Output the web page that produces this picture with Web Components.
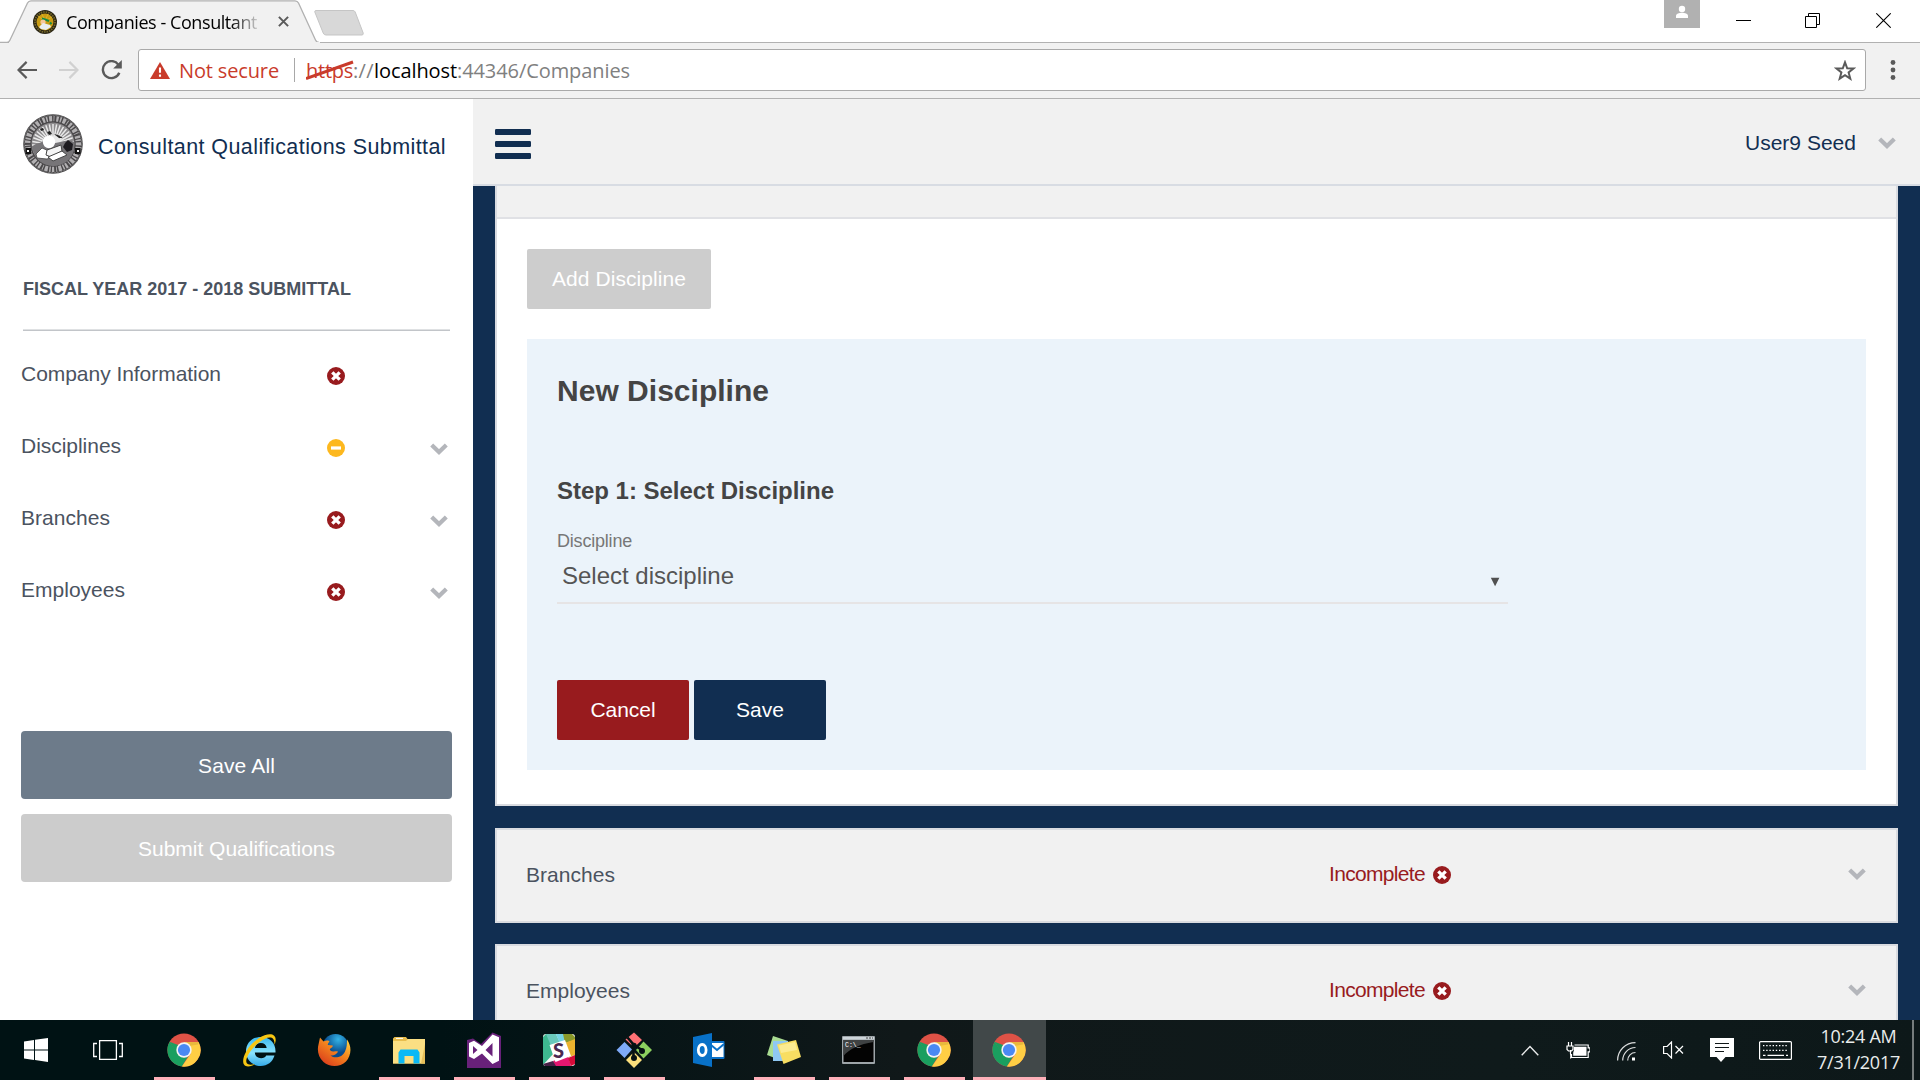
<!DOCTYPE html>
<html lang="en">
<head>
<meta charset="utf-8">
<title>Companies - Consultant Qualifications Submittal</title>
<style>
html,body{margin:0;width:1920px;height:1080px;overflow:hidden;background:#fff;font-family:"Liberation Sans",Arial,sans-serif}
</style>
</head>
<body>
<desktop-screen></desktop-screen>
<script>
const define = (name, html, setup) => {
  const tpl = document.createElement('template');
  tpl.innerHTML = '<style>:host{display:block;box-sizing:border-box}*{box-sizing:border-box}svg{display:block}</style>' + html;
  customElements.define(name, class extends HTMLElement {
    connectedCallback() {
      if (this.shadowRoot) return;
      this.attachShadow({ mode: 'open' }).append(tpl.content.cloneNode(true));
      if (setup) setup(this, this.shadowRoot);
    }
  });
};

/* Icon library: name -> [width, height, markup] */
const chromeLogo = `<circle cx="17" cy="17" r="16.6" fill="#de5246"/>
<path d="M2.6 8.7A16.6 16.6 0 0 0 14.9 33.5L22.8 20.4 17 24.7 10.3 20.5Z" fill="#1a9f5f"/>
<path d="M17 9.3H31.7A16.6 16.6 0 0 1 14.9 33.5L23.7 20.8Z" fill="#ffce44"/>
<path d="M2.6 8.7 10 21 11 12Z" fill="#1a9f5f"/>
<path d="M17 9.3H31.7L31 11.5 22 13Z" fill="#e9b93c"/>
<circle cx="17" cy="17" r="7.7" fill="#f4f4f4"/><circle cx="17" cy="17" r="6.1" fill="#4a89f3"/>`;
const rays = Array.from({length:19},(_,i)=>{const a=Math.PI*(1+i/18);return `M30 31L${(30+21*Math.cos(a)).toFixed(1)} ${(31+21*Math.sin(a)).toFixed(1)}`}).join('');
const ICONS = {
  error:[18,18,`<circle cx="9" cy="9" r="9" fill="#981b1e"/><path d="M5.3 5.3 12.7 12.7M12.7 5.3 5.3 12.7" stroke="#fff" stroke-width="3.3"/><path d="M9 3v2.8M9 12.2v2.8M3 9h2.8M12.2 9h2.8" stroke="#981b1e" stroke-width="1"/>`],
  partial:[18,18,`<circle cx="9" cy="9" r="9" fill="#fdb81e"/><path d="M4 9h10" stroke="#fff" stroke-width="3.2"/>`],
  chevron:[18,12,`<path d="M1.7 1.9 9 9 16.3 1.9" fill="none" stroke="#b4b6bb" stroke-width="4.2"/>`],
  menu:[36,30,`<g fill="#112e51"><rect width="36" height="6" rx="1.2"/><rect y="12" width="36" height="6" rx="1.2"/><rect y="24" width="36" height="6" rx="1.2"/></g>`],
  caret:[10,10,`<path d="M.8.7h8.6L5.1 9.2Z" fill="#505050"/>`],
  seal:[60,60,`<circle cx="30" cy="30" r="29.8" fill="#4a484a"/><circle cx="30" cy="30" r="25.4" fill="none" stroke="#b2b0b2" stroke-width="5.4" stroke-dasharray="1.5 1.4 3.1 1.5 .9 2 2.3 1.3"/><circle cx="30" cy="30" r="28.8" fill="none" stroke="#777" stroke-width="1" stroke-dasharray="2 1"/>
<circle cx="30" cy="30" r="21.5" fill="#8d8b8d"/><path d="${rays}" stroke="#e9e9e9" stroke-width="1.5"/>
<path d="M9 33c4-5 8-3 11-6s6 1 11 2 12-5 20-1v8c-2 9-10 16-21 16S11 43 9 33Z" fill="#777578"/>
<circle cx="26" cy="28" r="6.2" fill="#fff"/><path d="M13 40l6-6 7 3 3 6-5 2-10-1Z" fill="#fff" stroke="#444" stroke-width=".8"/><path d="M24 36l14-5 1 6-11 6-5-2Z" fill="#f5f5f5" stroke="#444" stroke-width="1"/><path d="M25 43l14-6 5 4-14 6Z" fill="#fff" stroke="#444" stroke-width="1"/>
<path d="M42 29l3-3 5 4-1 6-5 2-4-5Z" fill="#1e1c20"/><path d="M17 15l3-1 1 2-3 1ZM24 18l3-1 2 3-3 1ZM31 20l4 1 5 3-4 0Z" fill="#222"/>
<rect x="2.5" y="34" width="5.5" height="6" fill="#111"/><rect x="52" y="34" width="5.5" height="6" fill="#111"/><path d="M4 36h2v2H4ZM54 36h2v2H54Z" fill="#fff"/>`],
  favicon:[24,24,`<circle cx="12" cy="12" r="12" fill="#292413"/><circle cx="12" cy="12" r="10" fill="none" stroke="#776a2c" stroke-width="1.7" stroke-dasharray="1.5 1"/><circle cx="12" cy="12" r="8.5" fill="#c99c13"/><path d="M12 11 5 6M12 11 9 4M12 11 15 4M12 11 19 7" stroke="#e2b92b" stroke-width=".8"/><path d="M9 8.5 13.5 10 16 11M17 12.5 18.5 14" stroke="#118a45" stroke-width="2"/><circle cx="10" cy="12" r="2.6" fill="#f5c89a"/><path d="M6 17l4-4 7 2 1 2-5 3-5-1Z" fill="#e9eef0"/>`],
  tabclose:[11,11,`<path d="M.9.9 10.1 10.1M10.1.9.9 10.1" stroke="#5a5a5a" stroke-width="2"/>`],
  person:[36,28,`<rect width="36" height="28" fill="#b1b1b1"/><circle cx="18" cy="9" r="3.2" fill="#fff"/><path d="M12 18v-2c0-2.2 3-3.3 6-3.3s6 1.100 6 3.300v2Z" fill="#fff"/>`],
  minimize:[15,15,`<path d="M0 7.5h15" stroke="#000"/>`],
  restore:[15,15,`<path d="M.5 3.500h11v11H.5ZM3.500 3.500V.5h11v11h-3" fill="none" stroke="#000"/>`],
  close:[15,15,`<path d="M.3.3 14.7 14.7M14.700.3.3 14.700" stroke="#000" stroke-width="1.1"/>`],
  back:[20,18,`<path d="M20 9H2M9.600.9 1.500 9l8.100 8.100" fill="none" stroke="#5a5a5a" stroke-width="2.2"/>`],
  forward:[20,18,`<path d="M0 9h18M10.400.9 18.500 9l-8.100 8.100" fill="none" stroke="#d1d1d1" stroke-width="2.2"/>`],
  reload:[21,20,`<path d="M17.300 4.600A8.500 8.500 0 1 0 18.300 12.700" fill="none" stroke="#5a5a5a" stroke-width="2.400"/><path d="M20.800 0v8.600h-8.600Z" fill="#5a5a5a"/>`],
  warning:[20,17,`<path d="M10 0 20 17H0Z" fill="#c93b2b"/><path d="M10 5.500v5.200M10 12.500v2.200" stroke="#fff" stroke-width="2.100"/>`],
  star:[22,21,`<path d="M11 2.300 13.200 8.300 19.500 8.500 14.600 12.400 16.300 18.600 11 15.100 5.700 18.600 7.400 12.400 2.500 8.500 8.800 8.300Z" fill="none" stroke="#5a5a5a" stroke-width="2"/>`],
  dots:[6,20,`<g fill="#5a5a5a"><circle cx="3" cy="2.500" r="2.400"/><circle cx="3" cy="10" r="2.400"/><circle cx="3" cy="17.500" r="2.400"/></g>`],
  windows:[24,24,`<path d="M0 3.500 10 2v9.500H0ZM11 1.800 24 0v11.500H11ZM0 12.500h10V22L0 20.500ZM11 12.500h13V24L11 22.100Z" fill="#fff"/>`],
  taskview:[30,20,`<path d="M6.600.6h16.800v18.800H6.600ZM4 3.500H.700v13H4M26 3.500h3.300v13H26" fill="none" stroke="#fff" stroke-width="1.300"/>`],
  chrome:[34,34,chromeLogo],
  ie:[36,36,`<defs><linearGradient id="b" x2="0" y2="1"><stop stop-color="#39b8f0"/><stop offset=".55" stop-color="#8be3fd"/><stop offset="1" stop-color="#35a9e8"/></linearGradient></defs><path d="M34.500 20.500H13.800c.3 3.700 3 5.700 6.300 5.700 2.500 0 4.200-1 5.100-2.700h8.300c-2 6.600-7 10.400-13.800 10.400C11.800 33.900 5 28 5 19.500S11.300 4.900 19.700 4.900c9.300 0 15.300 6.200 14.800 15.600ZM13.900 16h11.800c-.5-3.200-2.700-4.900-5.800-4.900s-5.400 1.800-6 4.900Z" fill="url(#b)"/><path d="M33.500 13C38 2 29-1 17.500 6.500 5 15 0 28 3 32.500c2.500 3.500 8 1.500 11-.5-4 1-7 1-8.300-1-2-3 2.500-13 12-20.300C26 4.500 34 2.500 33.500 13Z" fill="#f7c612"/>`],
  firefox:[34,34,`<defs><radialGradient id="a" cx=".6" cy=".2"><stop stop-color="#34b3e6"/><stop offset="1" stop-color="#084b8d"/></radialGradient><linearGradient id="c" x1="1" x2=".2" y2="1"><stop stop-color="#ffe34c"/><stop offset=".45" stop-color="#f68a1e"/><stop offset="1" stop-color="#d93a1c"/></linearGradient></defs><circle cx="18.500" cy="14.500" r="13.500" fill="url(#a)"/><path d="M30 6.500c5 7 4.500 16-1 22-6 6-16.500 6-22.500.5C1 24 0 17 1.500 11.500L3 4.500l3.500 4c3-1.500 5.500-1 6 .3-1.200 1.200-1.600 2-1.700 3.200l5 .5c0 1.500-1 2.300-3 3.400.1 1.500 1.500 2.700 3.900 2.500 2 0 3.400-.6 4.300.4-1.500 2.800-4.500 4.200-7.500 3.700 4 3.500 12 2 14.500-4 2-4.500 2-8.500 2-12Z" fill="url(#c)"/>`],
  folder:[32,28,`<path d="M0 2.500 1.500 1H13l1.500 2H32v24.500H0Z" fill="#e8bd4d"/><path d="M0 5h13l2-2h17v24.500H0Z" fill="#fbdf83"/><path d="M3 2.400h7" stroke="#fff" stroke-width="1"/><path d="M5.500 27.500V16.500l2-3h17l2 3v11h-6v-7.500h-9v7.500Z" fill="#0bb9f5"/><path d="M32 8v19.500H28Z" fill="#e6bf5a"/>`],
  vs:[34,36,`<path d="M0 8 6 6.500 14 12 25.500.5 34 4v32H0Z" fill="#68217a"/><path fill-rule="evenodd" d="M25.500 2.500 32 5.300v23.400L25.500 32 15 21.500 7 27 2 24.500V11l5-2.200 8 5.300ZM6 14v8l4.500-4ZM25.500 11 18.500 18l7 6.500Z" fill="#fff"/>`],
  slack:[32,34,`<rect y="1" width="32" height="32" rx="3" fill="#f7f7f7"/><path d="M3 1H13L17 10 3 15Z" fill="#69c8ba"/><path d="M13 1h9l4 6-9 4Z" fill="#75d4e4"/><path d="M0 4 3 1l8 19-11 12Z" fill="#3eb890"/><path d="M20 1h9l3 3v3L22 10Z" fill="#89992a"/><path d="M22 10 32 6v16l-6 2Z" fill="#ecb32e"/><path d="M10 28l15-5 3 10H12Z" fill="#e51670"/><path d="M0 31l10-3 3 5H2Z" fill="#472047"/><path d="M25 25l7-3v9l-4 2Z" fill="#d60b38"/><path d="M6.500 12 22 7l6 16-15.500 6Z" fill="#fff"/><text x="10" y="25" font-family="Lato,sans-serif" font-size="20" font-weight="900" fill="#4b2850">S</text>`],
  git:[36,36,`<path d="M18 .5 26 8 18 15.500 9.500 7.500Z" fill="#ff7175"/><path d="M8.500 10 16 17.500 8.500 26 .5 18Z" fill="#7eaaf7"/><path d="M27.500 9.500 36 18 27.500 26.500 20 18Z" fill="#8cd05f"/><path d="M18 20 26 28 18 36 10 28Z" fill="#fce07d"/><path d="M11.500 5.500 17.500 12.500V26M18 13l8 5" stroke="#061113" stroke-width="2.600" fill="none"/><circle cx="18" cy="13.500" r="2.700" fill="#061113"/><circle cx="18" cy="26" r="3" fill="#061113"/><circle cx="26" cy="19" r="3" fill="#061113"/>`],
  outlook:[32,34,`<rect x="17" y="8" width="14.500" height="18" rx="1" fill="#0b71c8"/><path d="M19 10h11.500v14H19Z" fill="#fff"/><path d="M18 12l6 5 7-6" fill="none" stroke="#0b71c8" stroke-width="2"/><path d="M0 4 19 0v34L0 30Z" fill="#0871c8"/><ellipse cx="9.200" cy="17" rx="3.900" ry="5.500" fill="none" stroke="#fff" stroke-width="2.800"/>`],
  notes:[34,28,`<path d="M6 0 21 5 16 25 0 19Z" fill="#a9dc92"/><path d="M6 5h15v20H6Z" fill="#8fc8f2"/><path d="M10 8.500 29 4l5 17-17.500 7Z" fill="#f8de62"/><path d="M12 9.500 28 6l2 8-16 3Z" fill="#fbeb92"/>`],
  cmd:[33,28,`<rect width="33" height="28" rx="1" fill="#9ea5a9"/><rect x="1" y="1" width="31" height="2.500" fill="#cdd5da"/><path d="M24 2h2M27 2h2M30 2h1" stroke="#444"/><rect x="1.500" y="4" width="30" height="22" fill="#030303"/><path d="M1.500 4h30v2C18 8 7 13 1.500 20Z" fill="#3f4243"/><text x="3" y="11" fill="#fff" font-family="Liberation Mono,monospace" font-size="6.500">C:\\_</text>`],
  up:[18,11,`<path d="M.7 10.200 9 1.500l8.300 8.700" fill="none" stroke="#e8eaea" stroke-width="1.400"/>`],
  battery:[24,18,`<path d="M4.500 9v3.500c0 2 1 2.500 0 5M1 5h6v3.500L5.500 10h-3L1 8.500ZM2.500 1v4M5.500 1v4" fill="none" stroke="#fff" stroke-width="1.200"/><path d="M8.500 4h13.700v2.800H24v4h-1.800V16.500H5.500V13" fill="none" stroke="#fff" stroke-width="1.200"/><path d="M8 5.800h12.500v9H7.200v-3L8 9Z" fill="#fff"/>`],
  wifi:[19,19,`<g fill="none" stroke="#fff" stroke-width="1.200"><path d="M.6 18.500C.6 8.500 8.600.6 18.500.6M5.700 18.500C5.700 11.300 11.400 5.500 18.500 5.500M10.700 18.500c0-4.500 3.400-8 7.800-8" opacity=".85"/></g><rect x="15" y="15.500" width="3" height="3" fill="#fff"/>`],
  volume:[21,18,`<path d="M.6 5.500h3.500L8.500 1v16L4.100 12.500H.6ZM12.500 5l7.500 7.500M20 5l-7.500 7.500" fill="none" stroke="#fff" stroke-width="1.200"/>`],
  notice:[24,24,`<path d="M0 0h24v19H15.500L11 24 6.500 19H0Z" fill="#fff"/><path d="M5 5.500h14M5 9.500h14M5 13.500h9" stroke="#101718" stroke-width="1.100"/>`],
  keyboard:[33,19,`<rect x=".6" y=".6" width="31.800" height="17.800" rx="1" fill="none" stroke="#fff" stroke-width="1.200"/><path d="M4 4.700h25M4 9.300h25" stroke="#fff" stroke-width="1.200" stroke-dasharray="1.400 1.800"/><path d="M4 14.300h2.500M8.500 14.300h16.500M27 14.300h2" stroke="#fff" stroke-width="1.200"/>`]
};

define('desktop-screen', `<style>:host{display:flex;flex-direction:column;width:1920px;height:1080px;overflow:hidden}.page{display:flex;flex:1;min-height:0}</style>
<tab-strip></tab-strip><address-bar></address-bar>
<div class="page"><side-nav></side-nav><main-area></main-area></div>
<task-bar></task-bar>`);

define('tab-strip', `<style>:host{display:flex;height:43px;flex:none;background:linear-gradient(#b1b1b1,#b1b1b1) 0 42px/100% 1px no-repeat #fff;font-family:"Open Sans",sans-serif}
.tab{position:relative;width:314px;height:43px;display:flex;align-items:center;padding:0 0 0 33px}.tab>svg{position:absolute;left:0;top:0}
.title{position:relative;margin-left:9px;width:200px;flex:none;overflow:hidden;-webkit-mask-image:linear-gradient(90deg,#000 165px,transparent 196px);mask-image:linear-gradient(90deg,#000 165px,transparent 196px)}
.tab ui-icon{position:relative}.new{margin:10px auto 0 0}.controls{display:flex;align-items:flex-start;padding-right:29px}.controls ui-icon{margin-top:13px}</style>
<div class="tab"><svg width="325" height="43"><path d="M0 42.500H7Q9 42.500 10 40L27.500 3Q28.500.8 31 .8H295Q297.500.8 298.500 3L315.500 40Q316.500 42.500 319 42.500" fill="#f1f1f1" stroke="#b1b1b1" stroke-width="1.300"/><path d="M0 42.600H320" stroke="#f1f1f1" stroke-width="1.200"/><path d="M0 42.500H9" stroke="#b1b1b1"/></svg>
<ui-icon name="favicon"></ui-icon><div class="title"><ui-text size="18" lh="24" w="191">Companies - Consultant</ui-text></div><ui-icon name="tabclose" style="margin-left:12px"></ui-icon></div>
<svg class="new" width="50" height="26"><path d="M2 .5H39Q40.500.5 41.200 2L49.200 23Q49.500 25 48 25H12Q10 25 9.200 23L.8 2Q.5.5 2 .5Z" fill="#d8d8d8" stroke="#c5c5c5"/></svg>
<div class="controls"><ui-icon name="person" style="margin:0 36px 0 0"></ui-icon><ui-icon name="minimize" style="margin-right:54px"></ui-icon><ui-icon name="restore" style="margin-right:56px"></ui-icon><ui-icon name="close"></ui-icon></div>`);

define('address-bar', `<style>:host{display:flex;align-items:center;height:56px;flex:none;background:#f1f1f1;border-bottom:1px solid #b1b1b1;padding:0 24px 1px 17px;font-family:"Open Sans",sans-serif}
.box{display:flex;align-items:center;height:42px;width:1728px;margin:0 24px 0 16px;background:#fff;border:1px solid #a9a9a9;border-radius:3px;padding-left:11px}
.box ui-text{margin-top:1px}.sep{width:1px;height:24px;background:#a8a8a8;margin:0 11px 0 15px}.url{display:flex;flex:1;color:#808080}.https{position:relative;color:#c93b2b}.https svg{position:absolute;left:0;top:4px}.host{color:#000}</style>
<ui-icon name="back"></ui-icon><ui-icon name="forward" style="margin-left:22px"></ui-icon><ui-icon name="reload" style="margin-left:22px"></ui-icon>
<div class="box"><ui-icon name="warning"></ui-icon><ui-text size="20" lh="28" w="100" style="color:#c93b2b;margin-left:9px">Not secure</ui-text><span class="sep"></span>
<div class="url"><span class="https"><ui-text size="20" lh="28" w="47">https</ui-text><svg width="48" height="20"><path d="M0 18.500 47 2" stroke="#c93b2b" stroke-width="3"/></svg></span><ui-text size="20" lh="28" w="21">://</ui-text><ui-text class="host" size="20" lh="28" w="83">localhost</ui-text><ui-text size="20" lh="28" w="173">:44346/Companies</ui-text></div>
<ui-icon name="star" style="margin-right:9px"></ui-icon></div><ui-icon name="dots"></ui-icon>`);

define('side-nav', `<style>:host{display:flex;flex-direction:column;width:473px;flex:none;background:#fff;color:#4b535f;padding:0 21px}
.brand{display:flex;align-items:center;height:60px;margin:15px 0 0 2px;color:#112e51}
.fiscal{margin:101px 0 0 2px}.rule{height:2px;margin:26px 2px 0;background:linear-gradient(#dfe1e3 50%,#c2c5c9 50%)}
.list{margin-top:7px}ui-button{margin-bottom:15px;padding-top:2px}.list+ui-button{margin-top:105px}</style>
<div class="brand"><ui-icon name="seal"></ui-icon><ui-text size="21.500" lh="30" w="348" style="margin:5px 0 0 15px">Consultant Qualifications Submittal</ui-text></div>
<ui-text class="fiscal" bold size="18" lh="28" w="328">FISCAL YEAR 2017 - 2018 SUBMITTAL</ui-text>
<div class="rule"></div>
<div class="list"><nav-row label="Company Information" w="200" status="error"></nav-row><nav-row label="Disciplines" w="100" status="partial" expandable></nav-row><nav-row label="Branches" w="89" status="error" expandable></nav-row><nav-row label="Employees" w="104" status="error" expandable></nav-row></div>
<ui-button bg="#6d7b8a" width="431" height="68" radius="4" tw="77">Save All</ui-button><ui-button bg="#cccccc" width="431" height="68" radius="4" tw="197">Submit Qualifications</ui-button>`);

define('nav-row', `<style>:host{display:flex;align-items:center;height:72px}.label{width:306px}.s{margin-top:3px}.c{margin:5px 0 0 85px}</style>
<div class="label"></div><div class="s"></div><div class="c"></div>`, (el, r) => {
  r.querySelector('.label').innerHTML = `<ui-text size="21" lh="30" w="${el.getAttribute('w')}">${el.getAttribute('label')}</ui-text>`;
  r.querySelector('.s').innerHTML = `<ui-icon name="${el.getAttribute('status')}"></ui-icon>`;
  if (el.hasAttribute('expandable')) r.querySelector('.c').innerHTML = '<ui-icon name="chevron"></ui-icon>';
});

define('main-area', `<style>:host{display:flex;flex-direction:column;flex:1;min-width:0;background:#112e51;overflow:hidden}
header{display:flex;align-items:center;justify-content:space-between;height:87px;flex:none;padding:5px 24px 0 22px;background:#f1f1f1;border-bottom:2px solid #d8dce3}
.user{display:flex;align-items:center;color:#112e51}.body{flex:1;min-height:0;padding:0 22px;overflow:hidden}accordion-row{margin-top:22px}accordion-row+accordion-row{margin-top:21px}</style>
<header><ui-icon name="menu"></ui-icon><div class="user"><ui-text size="21" lh="30" w="111" style="margin-top:-2px">User9 Seed</ui-text><ui-icon name="chevron" style="margin:-2px 0 0 22px"></ui-icon></div></header>
<div class="body"><discipline-panel></discipline-panel><accordion-row label="Branches" w="89"></accordion-row><accordion-row label="Employees" w="104"></accordion-row></div>`);

define('discipline-panel', `<style>:host{width:1403px;height:620px;background:#fff;border:2px solid #d9dbe0;border-top:0}
.head{height:33px;background:#f1f1f1;border-bottom:2px solid #e0e1e5}.content{padding:30px 30px 0}
.form{margin-top:30px;height:431px;background:#ebf3fa;padding:34px 30px 0;color:#444}
.select{display:flex;align-items:center;width:951px;height:46px;border-bottom:2px solid #e6e4e5;padding:0 8px 5px 5px;justify-content:space-between;color:#555}
.actions{display:flex;gap:5px;margin-top:76px}</style>
<div class="head"></div><div class="content"><ui-button bg="#cdcdcd" width="184" height="60" radius="2" tw="134">Add Discipline</ui-button>
<div class="form"><ui-text bold size="30" lh="36" w="212">New Discipline</ui-text>
<ui-text bold size="24" lh="32" w="277" style="margin-top:66px">Step 1: Select Discipline</ui-text>
<ui-text size="18" lh="24" w="75" style="margin-top:22px;color:#777">Discipline</ui-text>
<div class="select" style="margin-top:5px"><ui-text size="24" lh="32" w="172" style="margin-top:-4px">Select discipline</ui-text><ui-icon name="caret" style="margin-top:8px"></ui-icon></div>
<div class="actions"><ui-button bg="#981b1e" width="132" height="60" radius="2" tw="65">Cancel</ui-button><ui-button bg="#112e51" width="132" height="60" radius="2" tw="48">Save</ui-button></div></div></div>`);

define('accordion-row', `<style>:host{display:flex;align-items:center;width:1403px;height:95px;border:2px solid #d9dbe0;background:#f1f1f1;padding:0 30px 3px 29px;color:#4b535f}
.label{width:804px;padding-top:1px}.status{display:flex;align-items:center;flex:1;color:#981b1e}</style>
<div class="label"></div><div class="status"><ui-text size="21" lh="30" w="96" style="margin-left:-1px">Incomplete</ui-text><ui-icon name="error" style="margin:1px 0 0 8px"></ui-icon></div><ui-icon name="chevron"></ui-icon>`, (el, r) => {
  r.querySelector('.label').innerHTML = `<ui-text size="21" lh="30" w="${el.getAttribute('w')}">${el.getAttribute('label')}</ui-text>`;
});

define('ui-button', `<style>:host{display:flex;align-items:center;justify-content:center;color:#fff;flex:none}</style><ui-text size="21" lh="30"><slot></slot></ui-text>`, (el, r) => {
  const a = n => el.getAttribute(n);
  Object.assign(el.style, { background: a('bg'), width: a('width') + 'px', height: a('height') + 'px', borderRadius: a('radius') + 'px' });
  r.querySelector('ui-text').setAttribute('w', a('tw'));
});

define('task-bar', `<style>:host{display:flex;height:60px;flex:none;background:linear-gradient(90deg,#001214 0,#001214 440px,#101819 900px,#0f1a1b 1500px,#0d1819);color:#e9ecec;font-family:"Open Sans",sans-serif}
.tray{display:flex;align-items:center;margin-left:auto}.clock{display:flex;flex-direction:column;align-items:center;width:83px;margin:-2px 0 0 25px}.edge{width:2px;height:60px;background:#767c7c;margin:0 6px 0 12px}</style>
<task-item icon="windows" style="width:72px"></task-item><task-item icon="taskview"></task-item>
<task-item icon="chrome" running></task-item><task-item icon="ie"></task-item><task-item icon="firefox"></task-item><task-item icon="folder" running></task-item><task-item icon="vs" running></task-item><task-item icon="slack" running></task-item><task-item icon="git" running></task-item><task-item icon="outlook"></task-item><task-item icon="notes" running></task-item><task-item icon="cmd" running></task-item><task-item icon="chrome" running></task-item><task-item icon="chrome" running active></task-item>
<div class="tray"><ui-icon name="up"></ui-icon><ui-icon name="battery" style="margin-left:27px"></ui-icon><ui-icon name="wifi" style="margin:2px 0 0 27px"></ui-icon><ui-icon name="volume" style="margin-left:27px"></ui-icon><ui-icon name="notice" style="margin-left:26px"></ui-icon><ui-icon name="keyboard" style="margin-left:25px"></ui-icon>
<div class="clock"><ui-text size="18" lh="26" w="76">10:24 AM</ui-text><ui-text size="18" lh="26" w="83">7/31/2017</ui-text></div><div class="edge"></div></div>`);

define('task-item', `<style>:host{display:flex;flex-direction:column;align-items:center;width:75px;height:60px}.i{height:57px;display:flex;align-items:center;padding:3px 2px 0 0}:host([icon=taskview]) .i{padding-right:3px}:host([icon=windows]) .i{padding-right:0}.line{width:61px;height:3px}:host([running]) .line{background:#feb0b9}:host([active]){background:#414849;width:73px;margin-left:1px}:host([active]) .line{width:100%}</style><div class="i"></div><div class="line"></div>`,
  (el, r) => { r.querySelector('.i').innerHTML = `<ui-icon name="${el.getAttribute('icon')}"></ui-icon>`; });

define('ui-icon', `<style>:host{flex:none}</style>`, (el, r) => {
  const [w, h, art] = ICONS[el.getAttribute('name')];
  el.style.width = w + 'px';
  r.innerHTML += `<svg width="${w}" height="${h}" viewBox="0 0 ${w} ${h}">${art}</svg>`;
});

/* Single-line text whose tracking is adjusted to occupy the requested width. */
define('ui-text', `<style>:host{white-space:nowrap;flex:none}span{display:inline-block;white-space:nowrap}</style><span><slot></slot></span>`, (el, r) => {
  const s = r.querySelector('span'), w = +el.getAttribute('w');
  el.style.fontSize = el.getAttribute('size') + 'px';
  el.style.lineHeight = el.getAttribute('lh') + 'px';
  if (el.hasAttribute('bold')) el.style.fontWeight = '700';
  let text = el.textContent;
  if (!text && el.getRootNode().host) text = el.getRootNode().host.textContent;
  const natural = s.getBoundingClientRect().width;
  if (w && natural) {
    const gap = (w - natural) / text.trim().length;
    el.style.letterSpacing = gap.toFixed(3) + 'px';
    el.style.width = w + 'px';
  }
});
</script>
</body>
</html>
